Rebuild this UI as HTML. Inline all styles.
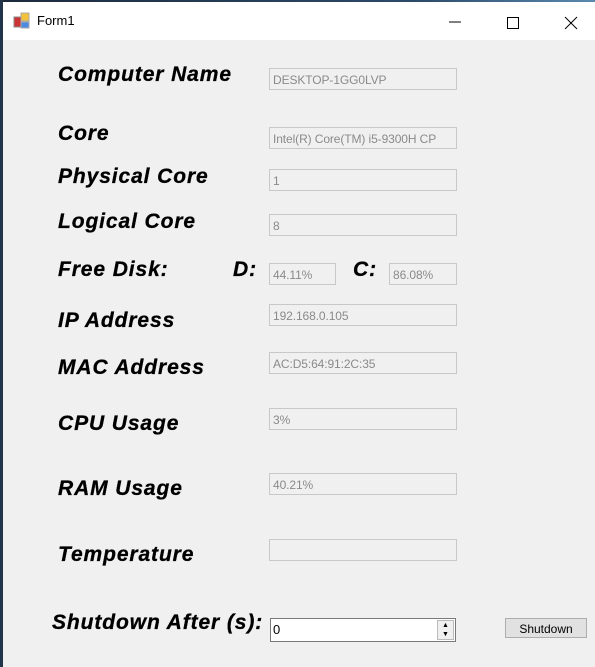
<!DOCTYPE html>
<html><head><style>
body{margin:0;width:595px;height:667px;overflow:hidden;background:#f0f0f0;font-family:"Liberation Sans",sans-serif;position:relative}
.top{position:absolute;left:0;top:0;width:595px;height:2px;background:linear-gradient(90deg,#1c2a3c,#2c4a6a 70%,#5a8ab0)}
.lb{position:absolute;left:0;top:0;width:3px;height:667px;background:#22344a}
.title{position:absolute;left:3px;top:2px;width:592px;height:38px;background:#fff}
.title span{position:absolute;left:34px;top:11px;font-size:13px;color:#000}
.l{position:absolute;font-weight:bold;font-style:italic;font-size:21px;color:#000;white-space:nowrap;letter-spacing:0.9px;-webkit-text-stroke:0.3px #000}
.t{position:absolute;height:22px;border:1px solid #c8c8c8;background:#f0f0f0;box-sizing:border-box;font-size:12px;color:#8a8a8a;padding:4px 0 0 3px;white-space:nowrap;overflow:hidden;letter-spacing:-0.1px}
</style></head><body>
<div class="top"></div><div class="lb"></div>
<div class="title">
<svg style="position:absolute;left:10px;top:10px" width="18" height="18" viewBox="0 0 18 18"><rect x="1" y="5" width="7" height="10" fill="#c33" stroke="#888" stroke-width="1"/><rect x="8" y="1" width="8" height="8" fill="#f2c23a" stroke="#aaa"/><rect x="8" y="10" width="8" height="6" fill="#4a8ae0" stroke="#aaa"/></svg>
<span>Form1</span>
<svg style="position:absolute;left:442px;top:12px" width="140" height="16"><line x1="4" y1="8" x2="16" y2="8" stroke="#000"/><rect x="62.5" y="3.5" width="11" height="11" fill="none" stroke="#000"/><line x1="120" y1="3" x2="132" y2="15" stroke="#000"/><line x1="132" y1="3" x2="120" y2="15" stroke="#000"/></svg>
</div>
<div class="l" style="left:58px;top:63px">Computer Name</div>
<div class="t" style="left:269px;top:68px;width:188px">DESKTOP-1GG0LVP</div>
<div class="l" style="left:58px;top:122px">Core</div>
<div class="t" style="left:269px;top:127px;width:188px">Intel(R) Core(TM) i5-9300H CP</div>
<div class="l" style="left:58px;top:165px">Physical Core</div>
<div class="t" style="left:269px;top:169px;width:188px">1</div>
<div class="l" style="left:58px;top:210px">Logical Core</div>
<div class="t" style="left:269px;top:214px;width:188px">8</div>
<div class="l" style="left:58px;top:258px">Free Disk:</div>
<div class="l" style="left:233px;top:258px">D:</div>
<div class="t" style="left:269px;top:263px;width:67px">44.11%</div>
<div class="l" style="left:353px;top:258px">C:</div>
<div class="t" style="left:389px;top:263px;width:68px">86.08%</div>
<div class="l" style="left:58px;top:309px">IP Address</div>
<div class="t" style="left:269px;top:304px;width:188px">192.168.0.105</div>
<div class="l" style="left:58px;top:356px">MAC Address</div>
<div class="t" style="left:269px;top:352px;width:188px">AC:D5:64:91:2C:35</div>
<div class="l" style="left:58px;top:412px">CPU Usage</div>
<div class="t" style="left:269px;top:408px;width:188px">3%</div>
<div class="l" style="left:58px;top:477px">RAM Usage</div>
<div class="t" style="left:269px;top:473px;width:188px">40.21%</div>
<div class="l" style="left:58px;top:543px">Temperature</div>
<div class="t" style="left:269px;top:539px;width:188px"></div>
<div class="l" style="left:52px;top:611px">Shutdown After (s):</div>
<div style="position:absolute;left:270px;top:618px;width:186px;height:24px;border:1px solid #7a7a7a;background:#fff;box-sizing:border-box;font-size:13px;padding:3px 0 0 2px">0
<div style="position:absolute;right:1px;top:1px;width:17px;height:20px;border:1px solid #bbb;box-sizing:border-box;background:#f0f0f0;font-size:7px;line-height:9px;text-align:center">▲<br>▼</div></div>
<div style="position:absolute;left:505px;top:618px;width:82px;height:20px;border:1px solid #adadad;background:#e1e1e1;box-sizing:border-box;font-size:12px;text-align:center;padding-top:3px">Shutdown</div>
</body></html>
